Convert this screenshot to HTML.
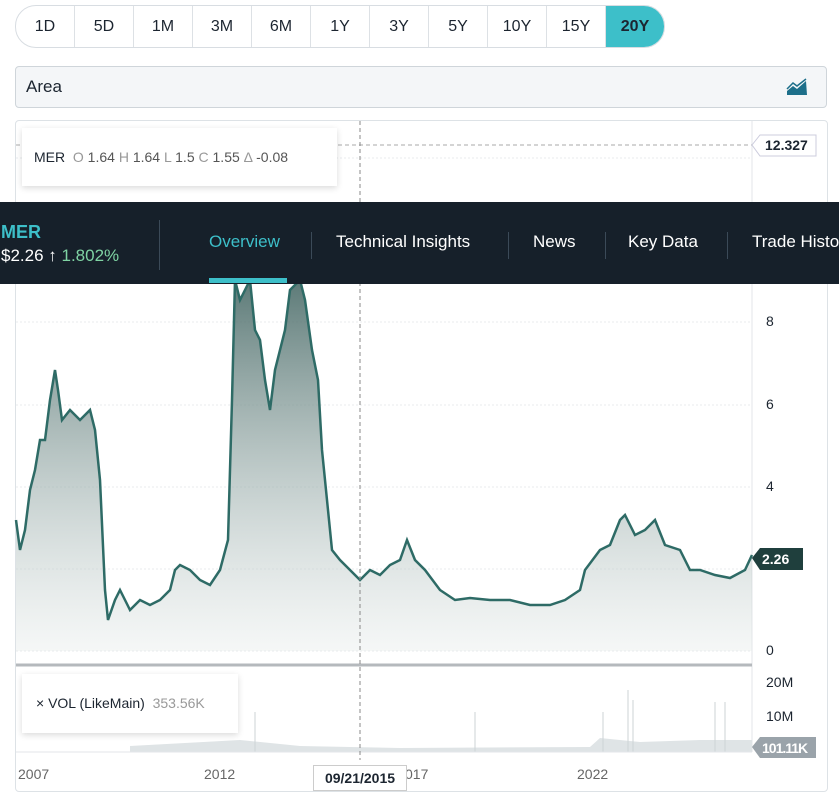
<!DOCTYPE html>
<html><head><style>
body{margin:0;width:839px;height:804px;background:#fff;font-family:"Liberation Sans",sans-serif;position:relative;overflow:hidden;color:#1c2530}
.rng{position:absolute;left:15px;top:5px;height:41px;border:1px solid #d8dde2;border-radius:21px;display:flex;overflow:hidden}
.rng div{width:58px;border-right:1px solid #dde1e5;text-align:center;line-height:41px;font-size:16px}
.rng div:last-child{border:none;background:#3dbfc9;font-weight:bold}
.sel{position:absolute;left:15px;top:66px;width:810px;height:40px;border:1px solid #cfd5da;border-radius:4px;background:#f4f6f8;font-size:17px;line-height:40px;text-indent:10px}
.box{position:absolute;left:15px;top:120px;width:811px;height:670px;border:1px solid #dde2e6;border-radius:4px}
.lbl{position:absolute;font-size:14px;color:#1c2530}
.nav{position:absolute;left:0;top:202px;width:839px;height:82px;background:#16202a;color:#fff}
.nav .t{position:absolute;top:30px;font-size:17px;white-space:nowrap}
.sep{position:absolute;top:30px;width:1px;height:27px;background:#3b4a58}
</style></head><body>
<div class="rng"><div>1D</div><div>5D</div><div>1M</div><div>3M</div><div>6M</div><div>1Y</div><div>3Y</div><div>5Y</div><div>10Y</div><div>15Y</div><div>20Y</div></div>
<div class="sel">Area
<svg style="position:absolute;right:18px;top:11px" width="22" height="18" viewBox="0 0 22 18"><path d="M1 17 L1 13 L7 8 L11 11 L20 3 L21 17Z" fill="#1d6f8a"/><path d="M1 11 L7 5 L11 8 L20 1" stroke="#1d6f8a" stroke-width="1.5" fill="none"/></svg></div>
<div class="box"></div>
<svg style="position:absolute;left:0;top:0" width="839" height="804">
<defs><linearGradient id="g" x1="0" y1="0" x2="0" y2="1"><stop offset="0" stop-color="#4a6b68" stop-opacity=".9"/><stop offset="1" stop-color="#e6ebea" stop-opacity=".4"/></linearGradient></defs>
<g stroke="#e8ebee" stroke-dasharray="2 2"><line x1="16" y1="322" x2="752" y2="322"/><line x1="16" y1="405" x2="752" y2="405"/><line x1="16" y1="487" x2="752" y2="487"/><line x1="16" y1="569" x2="752" y2="569"/><line x1="16" y1="651" x2="752" y2="651"/><line x1="16" y1="158" x2="752" y2="158"/></g>
<line x1="752" y1="121" x2="752" y2="752" stroke="#e3e6e9"/>
<line x1="16" y1="145" x2="752" y2="145" stroke="#aaa" stroke-dasharray="4 3"/>
<path d="M16 520L20 550L25 530L30 490L35 470L40 440L45 440L50 400L55 370L58 390L62 420L70 410L80 420L90 410L95 430L100 480L105 590L108 620L115 600L120 590L125 600L130 610L140 600L150 605L160 600L170 590L175 570L180 565L190 570L200 580L210 585L220 570L228 540L232 400L235 280L240 300L250 280L255 330L260 340L265 380L270 410L275 370L285 330L290 290L300 280L305 300L312 350L318 380L322 450L328 510L332 550L340 560L350 570L360 580L370 570L380 575L390 565L400 560L407 540L415 560L425 570L440 590L455 600L470 598L490 600L510 600L530 605L550 605L565 600L580 590L585 570L600 550L610 545L620 520L625 515L635 535L645 530L655 520L665 545L680 550L690 570L700 570L715 575L730 578L745 570L752 555L752 651L16 651Z" fill="url(#g)"/>
<path d="M16 520L20 550L25 530L30 490L35 470L40 440L45 440L50 400L55 370L58 390L62 420L70 410L80 420L90 410L95 430L100 480L105 590L108 620L115 600L120 590L125 600L130 610L140 600L150 605L160 600L170 590L175 570L180 565L190 570L200 580L210 585L220 570L228 540L232 400L235 280L240 300L250 280L255 330L260 340L265 380L270 410L275 370L285 330L290 290L300 280L305 300L312 350L318 380L322 450L328 510L332 550L340 560L350 570L360 580L370 570L380 575L390 565L400 560L407 540L415 560L425 570L440 590L455 600L470 598L490 600L510 600L530 605L550 605L565 600L580 590L585 570L600 550L610 545L620 520L625 515L635 535L645 530L655 520L665 545L680 550L690 570L700 570L715 575L730 578L745 570L752 555" fill="none" stroke="#2e6b66" stroke-width="2.5"/>
<line x1="16" y1="665" x2="752" y2="665" stroke="#b5b9bd" stroke-width="3"/>
<path d="M130 752L130 746L240 740L300 746L400 748L590 747L600 738L640 742L700 740L752 740L752 752Z" fill="#dfe4e6"/>
<g stroke="#cdd3d6" stroke-width="1"><line x1="255" y1="752" x2="255" y2="712"/><line x1="475" y1="752" x2="475" y2="712"/><line x1="603" y1="752" x2="603" y2="712"/><line x1="628" y1="752" x2="628" y2="690"/><line x1="633" y1="752" x2="633" y2="700"/><line x1="715" y1="752" x2="715" y2="702"/><line x1="725" y1="752" x2="725" y2="702"/></g>
<line x1="16" y1="752" x2="752" y2="752" stroke="#e3e6e9"/>
<line x1="360" y1="121" x2="360" y2="760" stroke="#888" stroke-dasharray="4 3"/>
<path d="M752 145L760 135L816 135L816 156L760 156Z" fill="#fff" stroke="#ccd"/>
<path d="M752 558L760 548L803 548L803 570L760 570Z" fill="#1f3f3d"/>
<path d="M752 747L760 737L816 737L816 758L760 758Z" fill="#9aa3aa"/>
</svg>
<div class="lbl" style="left:765px;top:137px;font-weight:bold">12.327</div>
<div class="lbl" style="left:762px;top:551px;font-weight:bold;color:#fff">2.26</div>
<div class="lbl" style="left:762px;top:740px;font-weight:bold;color:#fff;letter-spacing:-1px">101.11K</div>
<div class="lbl" style="left:766px;top:313px">8</div><div class="lbl" style="left:766px;top:396px">6</div><div class="lbl" style="left:766px;top:478px">4</div><div class="lbl" style="left:766px;top:642px">0</div>
<div class="lbl" style="left:766px;top:674px">20M</div><div class="lbl" style="left:766px;top:708px">10M</div>
<div class="lbl" style="left:18px;top:766px;color:#666">2007</div><div class="lbl" style="left:204px;top:766px;color:#666">2012</div><div class="lbl" style="left:405px;top:766px;color:#666">017</div><div class="lbl" style="left:577px;top:766px;color:#666">2022</div>
<div style="position:absolute;left:313px;top:765px;width:92px;height:24px;border:1px solid #ccc;background:#fff;font-size:14px;font-weight:bold;line-height:24px;text-align:center">09/21/2015</div>
<div style="position:absolute;left:22px;top:128px;width:315px;height:58px;background:#fff;box-shadow:0 2px 6px rgba(0,0,0,.15);font-size:14px;line-height:58px;text-indent:12px;white-space:nowrap">MER <span style="color:#999">&nbsp;O</span> <span style="color:#555">1.64</span> <span style="color:#999">H</span> <span style="color:#555">1.64</span> <span style="color:#999">L</span> <span style="color:#555">1.5</span> <span style="color:#999">C</span> <span style="color:#555">1.55</span> <span style="color:#999">Δ</span> <span style="color:#555">-0.08</span></div>
<div style="position:absolute;left:22px;top:674px;width:216px;height:59px;background:#fff;box-shadow:0 2px 6px rgba(0,0,0,.15);font-size:14px;line-height:59px;text-indent:14px;white-space:nowrap">× VOL (LikeMain) <span style="color:#999">&nbsp;353.56K</span></div>
<div class="nav">
<div style="position:absolute;left:1px;top:20px;font-size:18px;font-weight:bold;color:#3dbfc9">MER</div>
<div style="position:absolute;left:1px;top:44px;font-size:17px;white-space:nowrap">$2.26 ↑ <i style="font-style:normal;color:#7fd3a3">1.802%</i></div>
<div class="sep" style="left:159px;top:18px;height:50px"></div>
<div class="t" style="left:209px;color:#3dbfc9">Overview</div>
<div style="position:absolute;left:209px;top:76px;width:78px;height:5px;background:#3dbfc9"></div>
<div class="sep" style="left:311px"></div><div class="t" style="left:336px">Technical Insights</div>
<div class="sep" style="left:508px"></div><div class="t" style="left:533px">News</div>
<div class="sep" style="left:605px"></div><div class="t" style="left:628px">Key Data</div>
<div class="sep" style="left:727px"></div><div class="t" style="left:752px">Trade History</div>
</div>
</body></html>
